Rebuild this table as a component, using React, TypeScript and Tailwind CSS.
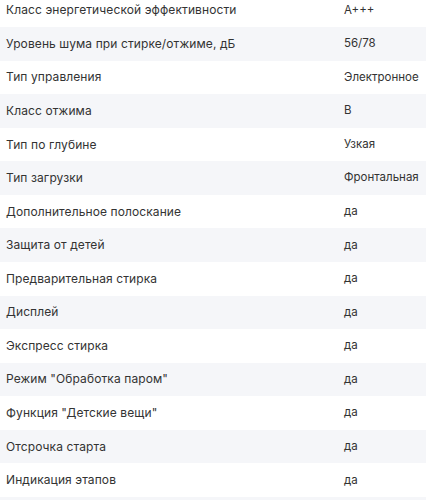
import React from 'react';

const specs: [string, string][] = [
  ['Класс энергетической эффективности', 'A+++'],
  ['Уровень шума при стирке/отжиме, дБ', '56/78'],
  ['Тип управления', 'Электронное'],
  ['Класс отжима', 'B'],
  ['Тип по глубине', 'Узкая'],
  ['Тип загрузки', 'Фронтальная'],
  ['Дополнительное полоскание', 'да'],
  ['Защита от детей', 'да'],
  ['Предварительная стирка', 'да'],
  ['Дисплей', 'да'],
  ['Экспресс стирка', 'да'],
  ['Режим "Обработка паром"', 'да'],
  ['Функция "Детские вещи"', 'да'],
  ['Отсрочка старта', 'да'],
  ['Индикация этапов', 'да'],
];

const App: React.FC = () => {
  return (
    <div className="h-[500px] overflow-hidden bg-white font-['Inter',sans-serif] text-[12px] text-[#333333]">
      <div className="-mt-[6.5px]">
        {specs.map(([label, value], i) => (
          <div
            key={label}
            className={`flex h-[33.57px] items-center ${i % 2 === 1 ? 'bg-[#f5f6f9]' : 'bg-white'}`}
          >
            <div className="w-[344px] shrink-0 pl-[6px] tracking-[0.1px]">{label}</div>
            <div className="flex-1 text-[11.5px]">{value}</div>
          </div>
        ))}
        {/* next row, cut off at the bottom edge */}
        <div className="h-[33.57px] bg-[#f5f6f9]" />
      </div>
    </div>
  );
};

export default App;
